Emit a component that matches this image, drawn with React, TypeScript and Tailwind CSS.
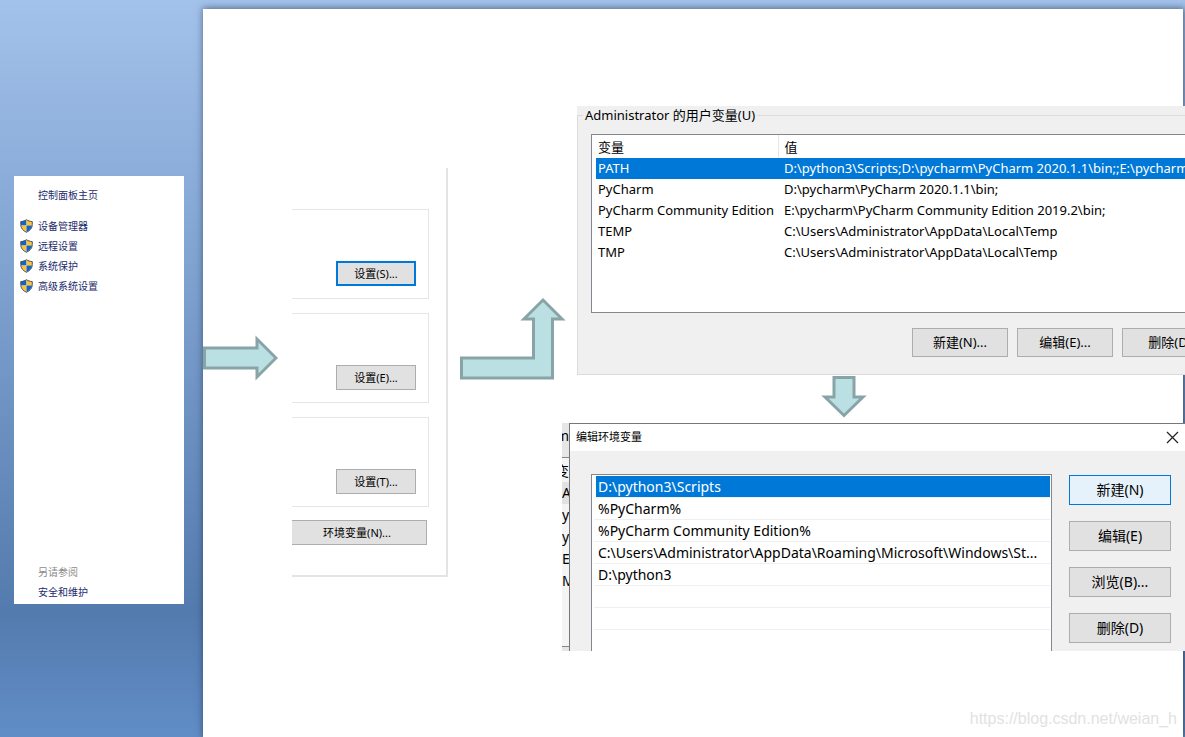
import { ButtonHTMLAttributes } from "react";
import { clsx } from "clsx";

const TASKS = ["设备管理器", "远程设置", "系统保护", "高级系统设置"];

const SETTINGS_GROUPS = [
  { label: "设置(S)...", focused: true },
  { label: "设置(E)...", focused: false },
  { label: "设置(T)...", focused: false },
];

const VARIABLES = [
  {
    name: "PATH",
    value:
      "D:\\python3\\Scripts;D:\\pycharm\\PyCharm 2020.1.1\\bin;;E:\\pycharm\\PyCharm Community Edition 2019.2\\bin;",
  },
  { name: "PyCharm", value: "D:\\pycharm\\PyCharm 2020.1.1\\bin;" },
  {
    name: "PyCharm Community Edition",
    value: "E:\\pycharm\\PyCharm Community Edition 2019.2\\bin;",
  },
  { name: "TEMP", value: "C:\\Users\\Administrator\\AppData\\Local\\Temp" },
  { name: "TMP", value: "C:\\Users\\Administrator\\AppData\\Local\\Temp" },
];

const PATHS = [
  "D:\\python3\\Scripts",
  "%PyCharm%",
  "%PyCharm Community Edition%",
  "C:\\Users\\Administrator\\AppData\\Roaming\\Microsoft\\Windows\\St...",
  "D:\\python3",
  "",
  "",
  "",
];

const DIALOG_ACTIONS = ["新建(N)", "编辑(E)", "浏览(B)...", "删除(D)"];

interface WinButtonProps extends ButtonHTMLAttributes<HTMLButtonElement> {
  tone?: "normal" | "focused" | "hot";
}

const WinButton = ({
  tone = "normal",
  className,
  ...props
}: WinButtonProps) => (
  <button
    type="button"
    className={clsx(
      "shrink-0 whitespace-nowrap text-center text-black",
      tone === "normal" && "border border-[#adadad] bg-[#e1e1e1]",
      tone === "focused" && "border-2 border-[#0078d7] bg-[#e1e1e1]",
      tone === "hot" && "border border-[#0078d7] bg-[#e5f1fb]",
      className
    )}
    {...props}
  />
);

const ShieldIcon = () => (
  <svg viewBox="0 0 13 14" className="h-3.5 w-[13px] shrink-0" aria-hidden="true">
    <path d="M6.5 1 1 2.6V6.5H6.5Z" fill="#0f66c8" />
    <path d="M6.5 1 12 2.6V6.5H6.5Z" fill="#fdc235" />
    <path d="M1 6.5H6.5V13C3.4 11.4 1.3 9.2 1 6.5Z" fill="#fdc235" />
    <path d="M12 6.5H6.5V13C9.6 11.4 11.7 9.2 12 6.5Z" fill="#0f66c8" />
    <path
      d="M6.5 .7C4.8 1.9 3 2.4 .7 2.6V5.6C.7 9.2 3 11.7 6.5 13.3 10 11.7 12.3 9.2 12.3 5.6V2.6C10 2.4 8.2 1.9 6.5 .7Z"
      fill="none"
      stroke="#4a545e"
      strokeWidth="1"
    />
  </svg>
);

const ARROW_CLASS = "shrink-0 fill-[#bbe0e3] stroke-[#89a4a7] stroke-3";

const ControlPanelNav = () => (
  <nav className="flex h-[428px] flex-col bg-white pl-1.5 text-[10px] leading-5 text-[#1c2b6b]">
    <a href="#home" className="mt-[9px] ml-[18px]">
      控制面板主页
    </a>
    <ul className="mt-[11px]">
      {TASKS.map((task) => (
        <li key={task}>
          <a href="#task" className="flex items-center gap-[5px]">
            <ShieldIcon />
            {task}
          </a>
        </li>
      ))}
    </ul>
    <div className="mt-auto mb-0.5 ml-[18px] flex flex-col">
      <span className="text-[#8c8c8c]">另请参阅</span>
      <a href="#security">安全和维护</a>
    </div>
  </nav>
);

const AdvancedSettings = () => (
  <section className="mt-[159px] ml-3.5 w-[156px] shrink-0 self-start border-r-2 border-b-2 border-[#e4e4e4] pt-[41px] pr-[17px] pb-[30px] text-[11px] leading-4">
    <div className="flex flex-col gap-3.5">
      {SETTINGS_GROUPS.map((group) => (
        <div
          key={group.label}
          className="flex h-[90px] items-end justify-end border border-l-0 border-[#e6e6e6] pr-3 pb-3"
        >
          <WinButton
            tone={group.focused ? "focused" : "normal"}
            className="h-[25px] w-20"
          >
            {group.label}
          </WinButton>
        </div>
      ))}
    </div>
    <div className="mt-[13px] flex pr-0.5">
      <WinButton className="h-[25px] flex-1 border-l-0 pr-1">
        环境变量(N)...
      </WinButton>
    </div>
  </section>
);

const UserVariables = () => (
  <section className="ml-[15px] overflow-hidden bg-[#f0f0f0]">
    <fieldset className="min-w-0 border border-r-0 border-[#dcdcdc] pb-[17px] pl-[13px]">
      <legend className="-ml-2 px-0.5 text-[13px] leading-[18px]">
        Administrator 的用户变量(U)
      </legend>
      <div className="mt-2.5 h-[179px] overflow-hidden border border-r-0 border-[#828790] bg-white pl-1">
        <table className="w-full table-fixed text-left text-[13px] leading-[21px] whitespace-nowrap">
          <thead>
            <tr>
              <th className="h-[23px] w-[182px] border-r border-[#e5e5e5] px-0.5 pt-0.5 font-normal">
                变量
              </th>
              <th className="px-1.5 pt-0.5 font-normal">值</th>
            </tr>
          </thead>
          <tbody>
            {VARIABLES.map((variable, i) => (
              <tr
                key={variable.name}
                className={clsx(i === 0 && "bg-[#0078d7] text-white")}
              >
                <td className="px-0.5">{variable.name}</td>
                <td className="overflow-hidden px-1.5">{variable.value}</td>
              </tr>
            ))}
          </tbody>
        </table>
      </div>
      {/* last button runs past the edge of the window */}
      <div className="-mr-[33px] mt-[15px] flex justify-end gap-[9px] text-[13px]">
        <WinButton className="h-[29px] w-24">新建(N)...</WinButton>
        <WinButton className="h-[29px] w-24">编辑(E)...</WinButton>
        <WinButton className="h-[29px] w-24">删除(D)</WinButton>
      </div>
    </fieldset>
  </section>
);

// Sliver of the parent window that shows behind the dialog
const WindowBehind = () => (
  <div
    className="flex w-[7px] shrink-0 flex-col overflow-hidden bg-[#e6e6e6] text-[14px]"
    aria-hidden="true"
  >
    <div className="flex h-[35px] shrink-0 items-start justify-end border-b border-[#828790] pt-[3px] leading-5">
      m
    </div>
    <div className="flex flex-1 flex-col items-end bg-[#f4f4f4] pt-0.5 leading-[22px]">
      <span>变</span>
      <span className="w-full bg-[#e2e2e2]">A</span>
      <span className="w-full">y</span>
      <span className="w-full">y</span>
      <span className="w-full">E</span>
      <span className="w-full">M</span>
    </div>
    <div className="h-[5px] border-t border-[#828790]" />
  </div>
);

const EditDialog = () => (
  <div className="flex h-[228px] overflow-hidden">
    <WindowBehind />
    <section className="flex min-w-0 flex-1 flex-col border-t border-l border-[#777777] bg-[#f0f0f0]">
      <header className="flex h-[27px] shrink-0 items-center justify-between bg-white px-1.5">
        <h2 className="text-[11px]">编辑环境变量</h2>
        <button type="button" aria-label="关闭">
          <svg viewBox="0 0 13 13" className="h-[13px] w-[13px]">
            <path d="M1 1 12 12M12 1 1 12" stroke="#222" strokeWidth="1.2" />
          </svg>
        </button>
      </header>
      <div className="flex gap-[17px] pt-[23px] pr-3.5 pl-[21px]">
        <ul className="h-[177px] min-w-0 flex-1 border border-b-0 border-[#828790] bg-white pt-px pr-px pl-0.5 text-[14px] leading-[22px] whitespace-nowrap">
          {PATHS.map((path, i) => (
            <li key={i} className="h-[22px] border-b border-[#f0f0f0] pl-0.5">
              <div
                className={clsx(
                  "h-[21px] overflow-hidden pl-0.5",
                  i === 0 && "bg-[#0078d7] text-white"
                )}
              >
                {path}
              </div>
            </li>
          ))}
        </ul>
        <div className="flex flex-col gap-4 pt-px text-[14px] leading-5">
          {DIALOG_ACTIONS.map((action, i) => (
            <WinButton
              key={action}
              tone={i === 0 ? "hot" : "normal"}
              className="h-[30px] w-[102px]"
            >
              {action}
            </WinButton>
          ))}
        </div>
      </div>
    </section>
  </div>
);

const App = () => {
  return (
    <div className="flex min-h-screen overflow-hidden bg-linear-to-b from-[#a3c2eb] via-[#547bae] via-83% to-[#618dc6] pt-[9px] font-['Noto_Sans','Noto_Sans_CJK_SC',sans-serif] text-black">
      <aside className="w-[203px] shrink-0 pt-[167px] pr-[19px] pl-3.5">
        <ControlPanelNav />
      </aside>

      <main className="mr-0.5 flex min-w-0 flex-1 bg-white shadow-[1px_0_7px_1px_rgba(20,35,60,0.55)]">
        <svg
          viewBox="0 0 75 46"
          className={clsx("mt-[326px] h-[46px] w-[75px]", ARROW_CLASS)}
        >
          <path d="M1.5 13H54V4L73 23 54 42V33H1.5Z" />
        </svg>

        <AdvancedSettings />

        <svg
          viewBox="0 0 106 84"
          className={clsx("mt-72 ml-3 h-[84px] w-[106px]", ARROW_CLASS)}
        >
          <path d="M1.5 61H73.5V22H64L83 3 102 22H92.5V81H1.5Z" />
        </svg>

        <div className="-mr-0.5 -ml-1 flex min-w-0 flex-1 flex-col pt-[97px]">
          <UserVariables />
          <svg
            viewBox="0 0 46 42"
            className={clsx(
              "mt-px mb-[5px] ml-[259px] h-[42px] w-[46px]",
              ARROW_CLASS
            )}
          >
            <path d="M13 1.5H33V21H42L23 39.5 4 21H13Z" />
          </svg>
          <EditDialog />
          <a
            href="https://blog.csdn.net/weian_h"
            className="mt-auto mr-2 mb-2 self-end font-['Liberation_Sans',sans-serif] text-[16px] leading-5 text-[#e2e2e2]"
          >
            https://blog.csdn.net/weian_h
          </a>
        </div>
      </main>
    </div>
  );
};

export default App;
